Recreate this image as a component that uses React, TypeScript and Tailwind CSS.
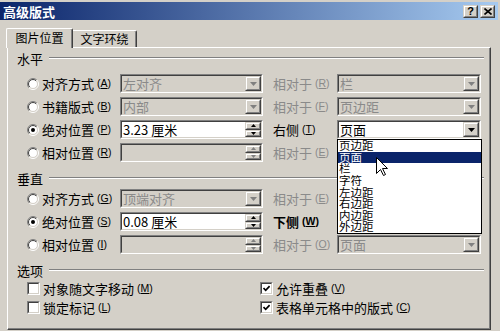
import React from "react";

const FONT = "font-['Noto_Sans_CJK_SC','Noto_Sans',sans-serif]";

function Mn({ c }: { c: string }) {
  return (
    <span className="ml-[3px] text-[10.5px] font-['Liberation_Sans',sans-serif] leading-none">
      (<span className="underline underline-offset-1">{c}</span>)
    </span>
  );
}

function Radio({ checked }: { checked?: boolean }) {
  return (
    <svg width="12" height="12" viewBox="0 0 12 12" className="shrink-0">
      <defs>
        <linearGradient id="ro" x1="0" y1="0" x2="1" y2="1">
          <stop offset="0.5" stopColor="#808080" />
          <stop offset="0.5" stopColor="#ffffff" />
        </linearGradient>
        <linearGradient id="ri" x1="0" y1="0" x2="1" y2="1">
          <stop offset="0.5" stopColor="#404040" />
          <stop offset="0.5" stopColor="#d4d0c8" />
        </linearGradient>
      </defs>
      <circle cx="6" cy="6" r="5.5" fill="none" stroke="url(#ro)" strokeWidth="1" />
      <circle cx="6" cy="6" r="4.5" fill="#fff" stroke="url(#ri)" strokeWidth="1" />
      {checked && <circle cx="6" cy="6" r="2" fill="#000" />}
    </svg>
  );
}

function Check({ checked }: { checked?: boolean }) {
  return (
    <div className="w-[13px] h-[13px] shrink-0 border border-t-[#808080] border-l-[#808080] border-b-white border-r-white">
      <div className="w-full h-full bg-white border border-t-[#404040] border-l-[#404040] border-b-[#d4d0c8] border-r-[#d4d0c8] flex items-center justify-center">
        {checked && (
          <svg width="7" height="7" viewBox="0 0 7 7">
            <path d="M0.5 3 L2.7 5.3 L6.6 1.2" stroke="#000" strokeWidth="1.7" fill="none" />
          </svg>
        )}
      </div>
    </div>
  );
}

function Raised({ className = "", children }: { className?: string; children?: React.ReactNode }) {
  return (
    <div className={`border border-t-[#d4d0c8] border-l-[#d4d0c8] border-b-[#404040] border-r-[#404040] ${className}`}>
      <div className="w-full h-full bg-[#d4d0c8] border border-t-white border-l-white border-b-[#808080] border-r-[#808080] flex items-center justify-center">
        {children}
      </div>
    </div>
  );
}

function ArrowBtn({ disabled }: { disabled?: boolean }) {
  return (
    <Raised className="w-[16px] h-full shrink-0">
      <svg width="7" height="4" viewBox="0 0 7 4">
        <path d="M0 0H7L3.5 4Z" fill={disabled ? "#808080" : "#000"} />
      </svg>
    </Raised>
  );
}

function Spin({ disabled }: { disabled?: boolean }) {
  const c = disabled ? "#808080" : "#000";
  return (
    <div className="w-[16px] h-full shrink-0 flex flex-col">
      <Raised className="flex-1">
        <svg width="5" height="3" viewBox="0 0 5 3">
          <path d="M0 3H5L2.5 0Z" fill={c} />
        </svg>
      </Raised>
      <Raised className="flex-1">
        <svg width="5" height="3" viewBox="0 0 5 3">
          <path d="M0 0H5L2.5 3Z" fill={c} />
        </svg>
      </Raised>
    </div>
  );
}

function Field({
  w,
  disabled,
  value,
  kind,
}: {
  w: string;
  disabled?: boolean;
  value?: string;
  kind: "combo" | "spin";
}) {
  return (
    <div className={`${w} h-[19px] shrink-0 border border-t-[#808080] border-l-[#808080] border-b-white border-r-white`}>
      <div
        className={`h-full flex border border-t-[#404040] border-l-[#404040] border-b-[#d4d0c8] border-r-[#d4d0c8] ${
          disabled ? "bg-[#d4d0c8]" : "bg-white"
        }`}
      >
        <div className={`flex-1 flex items-center pl-[1px] leading-none whitespace-nowrap ${disabled ? "text-[#8a8a8a]" : "text-black"}`}>
          {value}
        </div>
        {kind === "combo" ? <ArrowBtn disabled={disabled} /> : <Spin disabled={disabled} />}
      </div>
    </div>
  );
}

function Label({ text, m, disabled, bold }: { text: string; m: string; disabled?: boolean; bold?: boolean }) {
  return (
    <span className={`flex items-center whitespace-nowrap leading-none ${disabled ? "text-[#8a8a8a]" : "text-black"} ${bold ? "font-bold" : ""}`}>
      {text}
      <Mn c={m} />
    </span>
  );
}

type RowProps = {
  on?: boolean;
  text: string;
  m: string;
  field: React.ReactNode;
  rText: string;
  rm: string;
  rDisabled?: boolean;
  rBold?: boolean;
  rField: React.ReactNode;
};

function Row({ on, text, m, field, rText, rm, rDisabled, rBold, rField }: RowProps) {
  return (
    <div className="flex items-center h-[23px] pl-[19px]">
      <div className="flex items-center w-[93px] shrink-0">
        <Radio checked={on} />
        <span className="ml-[3px]">
          <Label text={text} m={m} />
        </span>
      </div>
      {field}
      <div className="w-[74px] pl-[10px] shrink-0">
        <Label text={rText} m={rm} disabled={rDisabled} bold={rBold} />
      </div>
      {rField}
    </div>
  );
}

function Section({ title, className = "" }: { title: string; className?: string }) {
  return (
    <div className={`flex items-center h-[16px] pl-[9px] pr-[6px] ${className}`}>
      <span className="leading-none">{title}</span>
      <div className="flex-1 ml-[6px] h-[2px] border-t border-t-[#808080] border-b border-b-white" />
    </div>
  );
}

function CheckItem({ checked, text, m }: { checked?: boolean; text: string; m: string }) {
  return (
    <div className="flex items-center">
      <Check checked={checked} />
      <span className="ml-[3px]">
        <Label text={text} m={m} />
      </span>
    </div>
  );
}

const LIST = ["页边距", "页面", "栏", "字符", "左边距", "右边距", "内边距", "外边距"];

export default function App() {
  return (
    <div className={`relative w-[500px] h-[331px] overflow-hidden bg-[#d4d0c8] text-[13px] text-black ${FONT}`}>
      {/* title bar */}
      <div className="mt-[2px] mr-[2px] h-[18px] flex items-center pl-[3px] pr-[3px] bg-[linear-gradient(to_right,#0a246a,#a6caf0)]">
        <span className="flex-1 text-white font-bold text-[13px] leading-none">高级版式</span>
        <Raised className="w-[15px] h-[13px]">
          <span className="text-[11px] font-bold leading-none font-['Liberation_Sans',sans-serif]">?</span>
        </Raised>
        <Raised className="w-[15px] h-[13px] ml-[2px]">
          <svg width="8" height="7" viewBox="0 0 8 7">
            <path d="M0.5 0.5L7.5 6.5M7.5 0.5L0.5 6.5" stroke="#000" strokeWidth="1.6" />
          </svg>
        </Raised>
      </div>

      {/* tabs */}
      <div className="mt-[8px] pl-[6px] h-[19px] flex items-end">
        <div className="relative z-10 w-[67px] h-[20px] mb-[-1px] bg-[#d4d0c8] border-t border-l border-r border-t-white border-l-white border-r-[#404040] rounded-t-[2px] shadow-[inset_-1px_0_0_#808080] flex items-center justify-center text-[12px] leading-none pb-[2px]">
          图片位置
        </div>
        <div className="w-[64px] h-[17px] bg-[#d4d0c8] border-t border-r border-t-white border-r-[#404040] rounded-tr-[2px] shadow-[inset_-1px_0_0_#808080] flex items-center justify-center text-[12px] leading-none">
          文字环绕
        </div>
      </div>

      {/* panel */}
      <div className="ml-[7px] w-[484px] h-[283px] border border-t-white border-l-white border-r-[#404040] border-b-[#404040] shadow-[inset_-1px_-1px_0_#808080]">
        <Section title="水平" className="mt-[2px]" />
        <div className="mt-[6px]">
          <Row
            text="对齐方式"
            m="A"
            field={<Field w="w-[143px]" kind="combo" disabled value="左对齐" />}
            rText="相对于"
            rm="R"
            rDisabled
            rField={<Field w="w-[144px]" kind="combo" disabled value="栏" />}
          />
          <Row
            text="书籍版式"
            m="B"
            field={<Field w="w-[143px]" kind="combo" disabled value="内部" />}
            rText="相对于"
            rm="F"
            rDisabled
            rField={<Field w="w-[144px]" kind="combo" disabled value="页边距" />}
          />
          <Row
            on
            text="绝对位置"
            m="P"
            field={<Field w="w-[143px]" kind="spin" value="3.23 厘米" />}
            rText="右侧"
            rm="T"
            rField={<Field w="w-[144px]" kind="combo" value="页面" />}
          />
          <Row
            text="相对位置"
            m="R"
            field={<Field w="w-[143px]" kind="spin" disabled value="" />}
            rText="相对于"
            rm="E"
            rDisabled
            rField={<Field w="w-[144px]" kind="combo" disabled value="" />}
          />
        </div>

        <Section title="垂直" className="mt-[6px]" />
        <div className="mt-[1px]">
          <Row
            text="对齐方式"
            m="G"
            field={<Field w="w-[143px]" kind="combo" disabled value="顶端对齐" />}
            rText="相对于"
            rm="E"
            rDisabled
            rField={<Field w="w-[144px]" kind="combo" disabled value="" />}
          />
          <Row
            on
            text="绝对位置"
            m="S"
            field={<Field w="w-[143px]" kind="spin" value="0.08 厘米" />}
            rText="下侧"
            rm="W"
            rBold
            rField={<Field w="w-[144px]" kind="combo" value="" />}
          />
          <Row
            text="相对位置"
            m="I"
            field={<Field w="w-[143px]" kind="spin" disabled value="" />}
            rText="相对于"
            rm="O"
            rDisabled
            rField={<Field w="w-[144px]" kind="combo" disabled value="页面" />}
          />
        </div>

        <Section title="选项" className="mt-[6px]" />
        <div className="flex pl-[19px] mt-[1px]">
          <div className="w-[233px] flex flex-col">
            <div className="h-[19px] flex items-center">
              <CheckItem text="对象随文字移动" m="M" />
            </div>
            <div className="h-[19px] flex items-center">
              <CheckItem text="锁定标记" m="L" />
            </div>
          </div>
          <div className="flex flex-col">
            <div className="h-[19px] flex items-center">
              <CheckItem checked text="允许重叠" m="V" />
            </div>
            <div className="h-[19px] flex items-center">
              <CheckItem checked text="表格单元格中的版式" m="C" />
            </div>
          </div>
        </div>
      </div>

      {/* dropdown list */}
      <div className="absolute left-[337px] top-[139px] w-[145px] h-[95px] border border-black bg-white flex flex-col z-20">
        {LIST.map((t) => (
          <div
            key={t}
            className={`h-[11.625px] leading-[11.625px] text-[11.5px] pl-[1px] whitespace-nowrap ${
              t === "页面" ? "bg-[#0a246a] text-white" : "text-black"
            }`}
          >
            {t}
          </div>
        ))}
      </div>

      {/* mouse cursor */}
      <svg className="absolute left-[376px] top-[157px] z-30" width="13" height="20" viewBox="0 0 13 20">
        <path d="M0.5 0.5L0.5 16.5L4.5 12.5L7.5 18.5L9.5 17.5L6.5 11.5L11.5 11.5Z" fill="#fff" stroke="#000" strokeWidth="1" strokeLinejoin="miter" />
      </svg>
    </div>
  );
}
